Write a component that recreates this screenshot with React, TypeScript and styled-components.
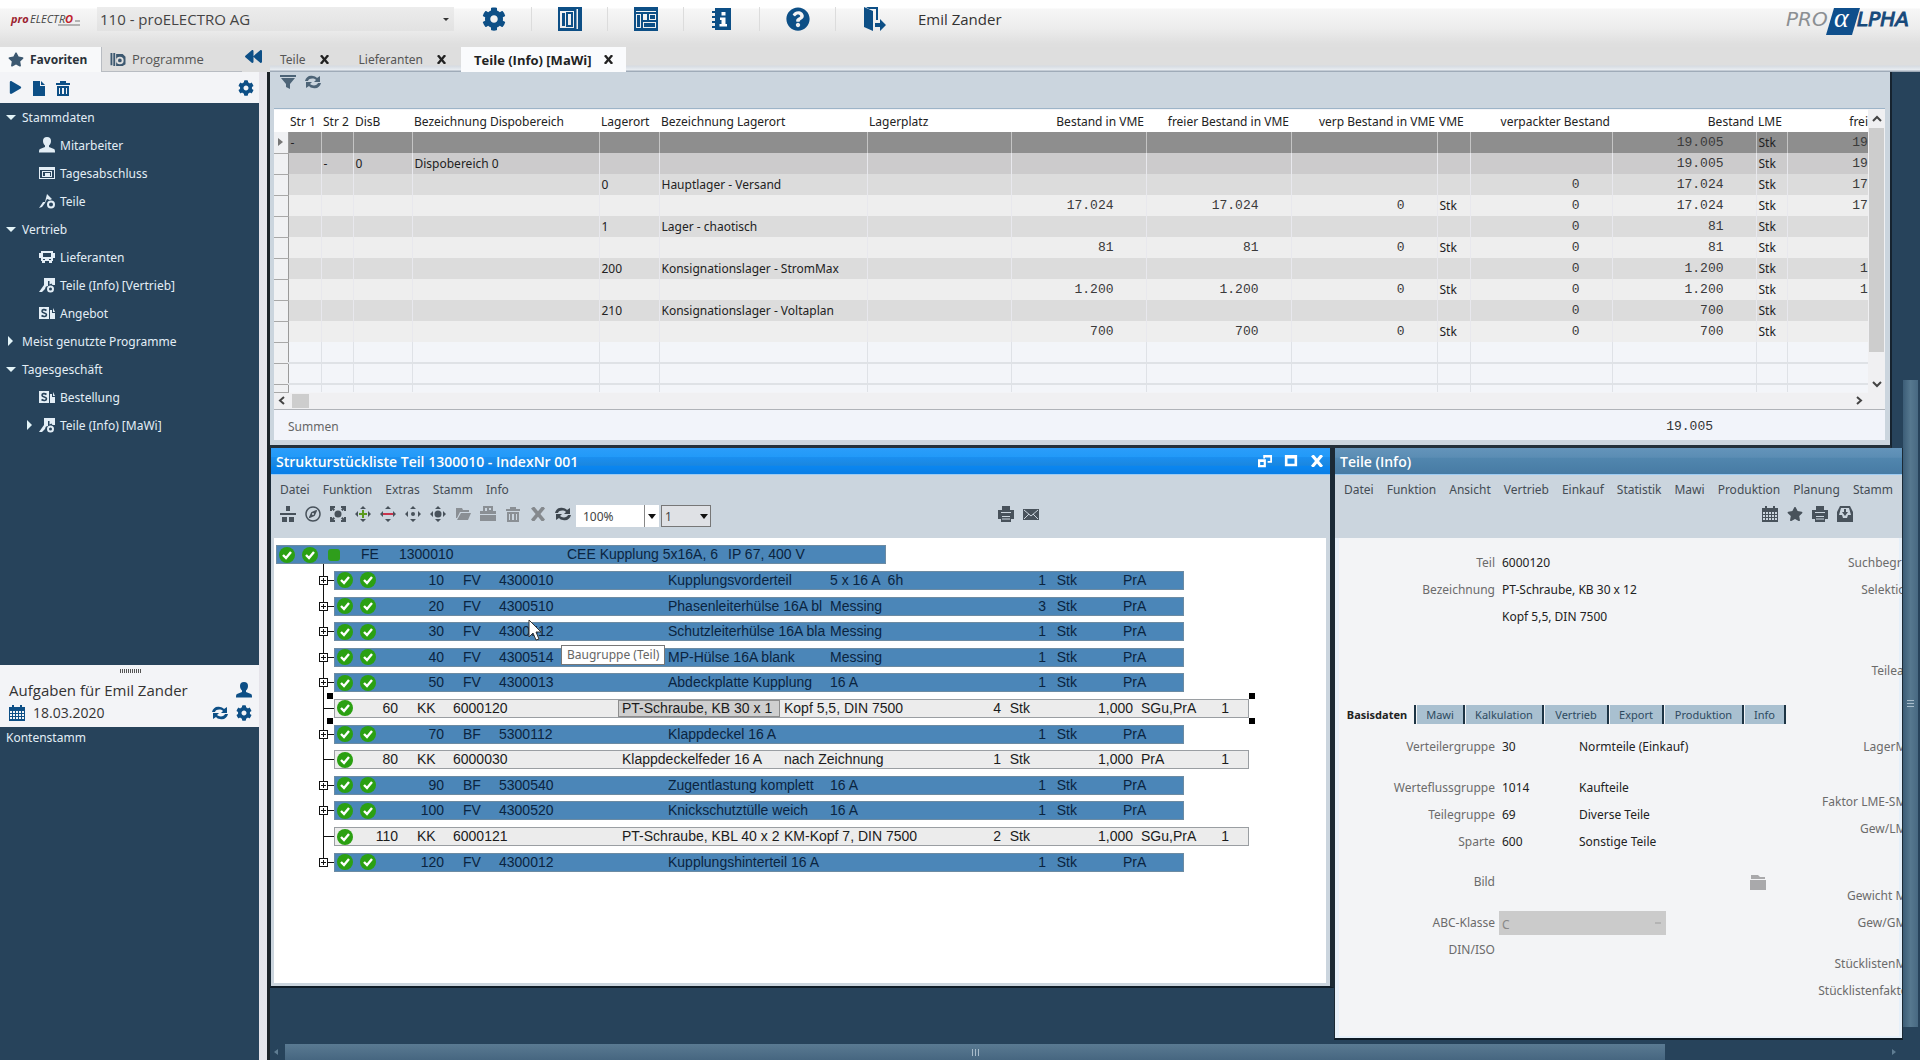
import React from "react";
import styled, { createGlobalStyle, css } from "styled-components";
import { FaCog, FaStar, FaPlay, FaQuestionCircle, FaBackward, FaFolderOpen, FaRegCompass } from "react-icons/fa";

const NAVY = "#27435b";
const BLUE = "#0d4f86";
const PANEL = "#cbd5de";
const SLATE = "#48525b";
const UI = `"Noto Sans", "Open Sans", sans-serif`;
const HEADING = `"Open Sans", "Noto Sans", sans-serif`;

const GlobalStyle = createGlobalStyle`
  * { box-sizing: border-box; }
  body { margin: 0; background: ${NAVY}; font-family: ${UI}; font-size: 12px; color: #222; }
  button, select, input { font: inherit; color: inherit; }
  button { border: 0; padding: 0; background: none; cursor: pointer; }
`;

const Page = styled.div`
  min-height: 100vh;
  display: flex;
  flex-direction: column;
  overflow: hidden;
`;

const TopBar = styled.header`
  height: 47px;
  padding-right: 8px;
  display: flex;
  align-items: flex-start;
  background: linear-gradient(#fff 0, #fff 8px, #f6f6f6 9px, #ededed 28px, #dfdfdf 44px);
`;
const CompanyLogo = styled.svg`
  width: 97px;
  height: 38px;
  flex: none;
`;
const ClientSelect = styled.select`
  appearance: none;
  width: 357px;
  height: 24px;
  margin-top: 7px;
  padding: 0 3px;
  border: 0;
  border-radius: 0;
  color: #444;
  font-family: ${HEADING};
  font-size: 15px;
  background: linear-gradient(#ececec, #e2e2e2);
`;
const ClientBox = styled.div`
  position: relative;
  &::after {
    content: "";
    position: absolute;
    right: 5px;
    top: 18px;
    border: 3px solid transparent;
    border-top-color: #333;
  }
`;
const MainTools = styled.nav`
  display: flex;
  height: 38px;
  padding-left: 2px;
  align-items: center;
`;
const MainTool = styled.button`
  width: 76px;
  height: 24px;
  display: grid;
  place-items: center;
  color: ${BLUE};
  border-right: 1px solid #dcdcdc;
  &:last-of-type { border-right: 0; }
  svg { width: 24px; height: 24px; }
`;
const UserName = styled.span`
  font-family: ${HEADING};
  font-size: 15px;
  line-height: 38px;
  color: #333;
  margin-left: 6px;
`;
const BrandLogo = styled.svg`
  width: 128px;
  height: 38px;
  margin-left: auto;
`;

const Body = styled.div`
  flex: 1;
  display: flex;
`;
const Sidebar = styled.aside`
  width: 270px;
  flex: none;
  display: flex;
  flex-direction: column;
  background: #dde2e8;
`;
const SideTabs = styled.div`
  height: 25px;
  display: flex;
  background: #dedede;
`;
const SideTab = styled.button<{ $active?: boolean }>`
  height: 25px;
  width: ${(p) => (p.$active ? 102 : 140)}px;
  display: flex;
  align-items: center;
  gap: 6px;
  padding-left: 8px;
  font-size: ${(p) => (p.$active ? 12 : 13)}px;
  font-family: ${(p) => (p.$active ? UI : HEADING)};
  font-weight: ${(p) => (p.$active ? 700 : 400)};
  color: ${(p) => (p.$active ? "#2a3138" : "#555")};
  background: ${(p) => (p.$active ? "#f8f9fa" : "transparent")};
  border-right: ${(p) => (p.$active ? "1px solid #b8bcc2" : "0")};
  border-bottom: ${(p) => (p.$active ? "0" : "1px solid #b8bcc2")};
  svg { color: #3c5870; width: 16px; height: 15px; flex: none; }
`;
const Collapse = styled.button`
  color: ${BLUE};
  font-size: 17px;
  width: 22px;
  height: 17px;
`;
const SideFrame = styled.div`
  flex: 1;
  display: flex;
  flex-direction: column;
  border-right: 3px solid #1d2227;
  padding-right: 8px;
  background: linear-gradient(90deg, #b9cfdd, #e6e4ea 100%);
`;
const SideTools = styled.div`
  height: 31px;
  padding: 0 5px 0 7px;
  display: flex;
  align-items: center;
  gap: 8px;
  background: #f3f4f7;
  color: ${BLUE};
`;
const IconButton = styled.button<{ $push?: boolean; $color?: string; $size?: number }>`
  width: 16px;
  height: 18px;
  display: grid;
  place-items: center;
  color: ${(p) => p.$color ?? BLUE};
  margin-left: ${(p) => (p.$push ? "auto" : "0")};
  svg { width: ${(p) => p.$size ?? 16}px; height: ${(p) => p.$size ?? 16}px; }
`;
const Favourites = styled.ul`
  list-style: none;
  margin: 0;
  padding: 0 0 226px;
  background: ${NAVY};
  color: #e3eef6;
`;
const FavGroup = styled.li`
  padding-left: 22px;
`;
const Caret = styled.span<{ $open?: boolean }>`
  width: 0;
  margin-left: -16px;
  margin-right: 6px;
  ${(p) =>
    p.$open
      ? css`border: 5px solid transparent; border-top: 5px solid #e3f4f8; border-bottom: 0;`
      : css`border: 5px solid transparent; border-left: 5px solid #e3f4f8; border-right: 0; margin-left: -14px; margin-right: 9px;`}
`;
const FavLabel = styled.button`
  height: 28px;
  width: 100%;
  display: flex;
  align-items: center;
  text-align: left;
  white-space: nowrap;
`;
const FavItem = styled(FavLabel)`
  padding-left: 17px;
  gap: 5px;
  svg { width: 16px; height: 16px; flex: none; }
  ${Caret} { margin: 0 2px 0 -12px; }
`;
const FavList = styled.ul`
  list-style: none;
  margin: 0;
  padding: 0;
`;
const Tasks = styled.section`
  height: 62px;
  padding: 4px 7px 0 9px;
  background: #f3f4f7;
  color: #333;
`;
const Grip = styled.div`
  width: 22px;
  height: 4px;
  margin: 0 auto 5px;
  background: repeating-linear-gradient(90deg, #555 0, #555 1px, #f3f4f7 1px, #f3f4f7 2px);
`;
const TaskLine = styled.div`
  height: 23px;
  display: flex;
  align-items: center;
  gap: 8px;
  font-family: ${HEADING};
  font-size: ${(p: { $small?: boolean }) => (p.$small ? 14 : 15)}px;
`;
const TaskTree = styled.div`
  flex: 1;
  padding: 1px 6px;
  line-height: 20px;
  background: ${NAVY};
  color: #e3eef6;
`;

const Main = styled.main`
  flex: 1;
  min-width: 0;
  display: flex;
  flex-direction: column;
`;
const DocTabs = styled.div`
  height: 25px;
  display: flex;
  background: linear-gradient(#dedede 0, #dedede 18px, #d6dbe2 19px, #e9edf2 23px, #9fabb8 24px);
`;
const DocTab = styled.div<{ $active?: boolean }>`
  display: flex;
  align-items: center;
  gap: ${(p) => (p.$active ? 12 : 14)}px;
  padding: 0 ${(p) => (p.$active ? 13 : 15)}px 0 ${(p) => (p.$active ? 13 : 15)}px;
  font-family: ${(p) => (p.$active ? HEADING : UI)};
  font-size: ${(p) => (p.$active ? 13 : 12)}px;
  font-weight: ${(p) => (p.$active ? 700 : 400)};
  color: ${(p) => (p.$active ? "#222" : "#555")};
  background: ${(p) => (p.$active ? "#fafbfd" : "transparent")};
  &:first-child { padding-left: 10px; }
  svg { width: 9px; height: 9px; display: block; color: #222; }
`;

const Workspace = styled.div`
  flex: 1;
  display: flex;
`;
const Desk = styled.div`
  flex: 1;
  min-width: 0;
  display: flex;
  flex-direction: column;
`;
const StockPanel = styled.section`
  margin-right: 11px;
  padding: 0 5px 5px 4px;
  background: ${PANEL};
  border-right: 2px solid #16232f;
  border-bottom: 3px solid #23303a;
`;
const StockTools = styled.div`
  height: 37px;
  padding: 1px 0 0 6px;
  display: flex;
  gap: 9px;
  border-bottom: 1px solid #9db4c8;
`;
const StockView = styled.div`
  display: flex;
  height: 301px;
  background: #f3f4f7;
  border-bottom: 1px solid #b0b3b8;
`;
const StockMain = styled.div`
  flex: 1;
  min-width: 0;
  overflow: hidden;
  display: flex;
  flex-direction: column;
`;
const StockTable = styled.table`
  width: 1657px;
  flex: none;
  table-layout: fixed;
  border-collapse: collapse;
  margin-top: 1px;
  th {
    height: 22px;
    background: #fff;
    color: #222;
    font-weight: 400;
    text-align: left;
    padding: 0 2px;
    white-space: nowrap;
  }
`;
const Cell = styled.td<{ $num?: boolean; $empty?: boolean; $line?: string }>`
  height: ${(p) => (p.$line === "stub" ? 8 : 21)}px;
  line-height: 20px;
  padding: 0 2px;
  white-space: nowrap;
  overflow: hidden;
  border-left: 1px solid ${(p) => (p.$empty ? "#dfe2e7" : p.$line ?? "rgba(214, 216, 222, 0.4)")};
  border-bottom: ${(p) => (p.$empty && p.$line !== "stub" ? "2px solid #dfe2e6" : "0")};
  ${(p) =>
    p.$num &&
    css`
      padding-right: 32px;
      text-align: right;
      color: #3a3a3a;
      font-family: "Liberation Mono", monospace;
      font-size: 13px;
    `}
`;
const Selector = styled.td`
  background: #f0f1f3;
  border-right: 1px solid #9a9a9a;
  border-bottom: 1px solid #a8a8a8;
  padding: 0;
`;
const RowMarker = styled.span`
  display: block;
  width: 0;
  margin-left: 4px;
  border: 4px solid transparent;
  border-left: 5px solid #777;
  border-right: 0;
`;
const HeadCell = styled.th<{ $right?: boolean }>`
  && { text-align: ${(p) => (p.$right ? "right" : "left")}; }
`;
const StockRow = styled.tr<{ $tone: string }>`
  background: ${(p) => p.$tone};
`;
const HScroll = styled.div`
  height: 17px;
  margin-top: auto;
  display: flex;
  align-items: center;
  padding: 0 4px 0 3px;
  gap: 5px;
  background: #f0f0f2;
  svg:last-child { margin-left: auto; }
`;
const HThumb = styled.div`
  width: 17px;
  height: 14px;
  background: #cdcdcd;
`;
const VScroll = styled.div`
  width: 17px;
  display: flex;
  flex-direction: column;
  align-items: center;
  padding: 5px 0 20px;
  background: #f0f0f2;
  svg:last-child { margin-top: auto; }
`;
const VThumb = styled.div`
  width: 15px;
  height: 224px;
  margin-top: 5px;
  background: #cdcdcd;
`;
const SumRow = styled.div`
  height: 30px;
  display: flex;
  align-items: center;
  justify-content: space-between;
  padding: 3px 172px 0 14px;
  background: #f2f4fa;
  color: #666;
`;
const SumValue = styled.span`
  font-family: "Liberation Mono", monospace;
  font-size: 13px;
  color: #333;
`;

const Windows = styled.div`
  display: flex;
  align-items: flex-start;
`;
const Win = styled.section<{ $main?: boolean }>`
  background: ${(p) => (p.$main ? PANEL : "#e6f0fa")};
  border-right: ${(p) => (p.$main ? 4 : 1)}px solid #1b2a36;
  border-bottom: 2px solid #0e1b26;
  border-left: 1px solid #1b2a36;
  ${(p) => (p.$main ? "flex: 1; min-width: 0;" : "width: 569px; flex: none;")}
`;
const TitleBar = styled.div<{ $active?: boolean }>`
  height: 27px;
  display: flex;
  align-items: center;
  padding: 0 6px 0 5px;
  color: #fff;
  font-family: ${HEADING};
  font-size: 14px;
  font-weight: 600;
  border-bottom: 1px solid #9dcbf2;
  background: ${(p) =>
    p.$active
      ? "linear-gradient(#2b9dfa 0, #229af8 34%, #1b8ff0 36%, #1a87e0 66%, #0a86f0 70%, #0a7fe6)"
      : "linear-gradient(#6494ba 0, #5b8db4 36%, #5186ae 38%, #477ba4)"};
`;
const WinButtons = styled.div`
  margin-left: auto;
  display: flex;
  gap: 12px;
  svg { width: 14px; height: 14px; display: block; }
  button:last-child svg { width: 12px; margin: 0 1px; }
`;
const MenuBar = styled.nav`
  height: 28px;
  display: flex;
  align-items: center;
  gap: 13px;
  padding: 0 9px;
  background: ${PANEL};
  white-space: nowrap;
  overflow: hidden;
  button { color: #444c54; flex: none; }
`;
const ToolBar = styled.div<{ $end?: boolean }>`
  height: 35px;
  display: flex;
  align-items: flex-start;
  gap: 9px;
  padding: ${(p) => (p.$end ? "2px 49px 0 0" : "2px 0 0 9px")};
  justify-content: ${(p) => (p.$end ? "flex-end" : "flex-start")};
  background: ${PANEL};
`;
const Combo = styled.select<{ $w: number; $plain?: boolean }>`
  appearance: none;
  width: ${(p) => p.$w}px;
  height: 22px;
  padding: 0 ${(p) => (p.$plain ? 3 : 7)}px;
  border: ${(p) => (p.$plain ? "1px solid #777" : "0")};
  border-radius: 0;
  background: ${(p) => (p.$plain ? "#dfe1e5" : "#fff")};
  color: #444;
`;
const ComboBox = styled.div<{ $plain?: boolean }>`
  position: relative;
  height: 22px;
  margin-right: ${(p) => (p.$plain ? 278 : 0)}px;
  margin-left: ${(p) => (p.$plain ? -7 : -4)}px;
  &::after {
    content: "";
    position: absolute;
    right: 3px;
    top: 9px;
    border: 4px solid transparent;
    border-top: 5px solid #111;
    border-bottom: 0;
  }
  &::before {
    content: "";
    position: absolute;
    right: 14px;
    top: 0;
    bottom: 0;
    border-left: ${(p) => (p.$plain ? "0" : "1px solid #888")};
  }
`;

const Canvas = styled.div`
  position: relative;
  height: 445px;
  margin: 0 4px 3px 3px;
  padding: 4px 0 0 2px;
  background: #fff;
  font-family: "Liberation Sans", Arial, sans-serif;
  font-size: 14px;
  overflow: hidden;
`;
const Bom = styled.div`
  position: relative;
  height: 333px;
  display: grid;
  grid-template-rows: repeat(13, 1fr);
`;
const Spine = styled.div`
  position: absolute;
  left: 47px;
  top: 22px;
  bottom: 13px;
  border-left: 1px solid #111;
`;
const BomLine = styled.div<{ $level: number }>`
  position: relative;
  display: flex;
  align-items: center;
  padding-left: ${(p) => p.$level * 58}px;
`;
const Branch = styled.div`
  position: absolute;
  left: 47px;
  width: 11px;
  border-top: 1px solid #111;
`;
const Expander = styled.button`
  position: absolute;
  left: 43px;
  width: 9px;
  height: 9px;
  border: 1px solid #111;
  background: linear-gradient(#111, #111) center / 5px 1px no-repeat, linear-gradient(#111, #111) center / 1px 5px no-repeat, #fff;
`;
type Kind = "root" | "group" | "part";
const BAR: Record<Kind, { width: number; cols: string }> = {
  root: { width: 610, cols: "84px 38px 168px 161px 1fr" },
  group: { width: 850, cols: "48px 61px 19px 36px 165px 162px 220px 31px 46px 1fr" },
  part: { width: 915, cols: "24px 39px 19px 36px 165px 162px 221px 29px 103px 8px 60px 28px" },
};
const Bar = styled.div<{ $kind: Kind }>`
  width: ${(p) => BAR[p.$kind].width}px;
  height: 19px;
  display: grid;
  grid-template-columns: ${(p) => BAR[p.$kind].cols};
  align-items: center;
  color: ${(p) => (p.$kind === "part" ? "#1b1b1b" : "#0a2440")};
  background: ${(p) => (p.$kind === "part" ? "#ececec" : "#4b86b8")};
  border: 1px solid ${(p) => (p.$kind === "part" ? "#9a9ea2" : "#6c8ba3")};
  white-space: nowrap;
  > span { line-height: 17px; }
`;
const Right = styled.span`
  text-align: right;
`;
const Name = styled.span<{ $boxed?: boolean }>`
  padding-left: 4px;
  ${(p) => p.$boxed && css`background: #cfcfcf; box-shadow: inset 0 0 0 1px #8d8d8d;`}
`;
const Checks = styled.div`
  display: flex;
  gap: 7px;
  padding-left: 2px;
  svg { width: 16px; height: 16px; display: block; flex: none; }
`;
const Handle = styled.i<{ $right?: boolean; $bottom?: boolean }>`
  position: absolute;
  width: 6px;
  height: 6px;
  background: #000;
  left: ${(p) => (p.$right ? 973 : 51)}px;
  ${(p) => (p.$bottom ? "bottom: -3px;" : "top: -3px;")}
`;
const Pointer = styled.svg`
  position: absolute;
  left: 254px;
  top: 81px;
  width: 14px;
  height: 22px;
`;
const Tooltip = styled.div`
  position: absolute;
  left: 287px;
  top: 107px;
  height: 20px;
  padding: 0 5px;
  line-height: 18px;
  border: 1px solid #777;
  background: #fff;
  color: #666;
  font-family: ${UI};
  font-size: 12px;
`;

const FormFrame = styled.div`
  overflow: hidden;
`;
const Form = styled.form`
  height: 498px;
  margin: 0 3px 2px 4px;
  padding-top: 11px;
  background: #f3f4f6;
  color: #222;
`;
const FormColumns = styled.div`
  display: flex;
  margin-right: -14px;
`;
const FormColumn = styled.div<{ $far?: boolean }>`
  ${(p) => (p.$far ? "width: 140px; flex: none; color: #6b6b6b; text-align: right;" : "flex: 1; min-width: 0;")}
`;
const FormRow = styled.div<{ $before?: number }>`
  height: 27px;
  line-height: 27px;
  margin-top: ${(p) => p.$before ?? 0}px;
  display: grid;
  grid-template-columns: 156px 84px 1fr;
  align-items: center;
  white-space: nowrap;
`;
const FarRow = styled.div<{ $before?: number }>`
  height: 27px;
  line-height: 27px;
  margin-top: ${(p) => p.$before ?? 0}px;
  white-space: nowrap;
`;
const Label = styled.label`
  text-align: right;
  color: #6b6b6b;
`;
const Value = styled.output`
  padding-left: 7px;
`;
const ValueName = styled.span``;
const FormTabs = styled.div`
  display: flex;
  height: 19px;
  margin: 21px 0 9px;
`;
const FormTab = styled.button<{ $active?: boolean; $w: number }>`
  width: ${(p) => p.$w}px;
  font-size: 11px;
  font-weight: ${(p) => (p.$active ? 700 : 400)};
  color: ${(p) => (p.$active ? "#222" : "#2d4a60")};
  background: ${(p) => (p.$active ? "transparent" : "#a9c0d0")};
  border-right: 2px solid #1d3444;
  border-left: 1px solid #f3f4f6;
`;
const ClassBox = styled.div`
  position: relative;
  grid-column: 2 / 4;
  width: 167px;
  height: 24px;
  margin-left: 4px;
  &::after {
    content: "";
    position: absolute;
    right: 5px;
    top: 11px;
    width: 6px;
    border-top: 2px solid #b4b4b4;
  }
`;
const ClassSelect = styled.select`
  appearance: none;
  display: block;
  width: 100%;
  height: 100%;
  padding: 0 3px;
  border: 0;
  border-radius: 0;
  background: #cbcbcb;
  color: #888;
  opacity: 1;
`;
const PictureButton = styled(IconButton)`
  grid-column: 3;
  margin-left: 171px;
`;

const VTrack = styled.div`
  width: 17px;
  flex: none;
  padding-top: 308px;
  background: ${NAVY};
`;
const DarkThumb = styled.div`
  height: 647px;
  margin-right: 2px;
  background: linear-gradient(90deg, #3c5d77, #56788f 50%, #486982);
  display: grid;
  place-items: center;
`;
const HTrack = styled.div`
  height: 21px;
  margin-top: auto;
  display: flex;
  align-items: center;
  padding: 3px 23px 0 3px;
  gap: 6px;
  background: ${NAVY};
`;
const DarkHThumb = styled.div`
  width: 85%;
  height: 16px;
  margin-right: auto;
  background: linear-gradient(#5a7a92, #466680);
  display: grid;
  place-items: center;
`;
const Ridges = styled.div<{ $down?: boolean }>`
  width: 7px;
  height: 7px;
  background: repeating-linear-gradient(${(p) => (p.$down ? "180deg" : "90deg")}, #a8bccb 0, #a8bccb 1px, transparent 1px, transparent 3px);
`;

const Svg = (p: React.SVGProps<SVGSVGElement>) => <svg viewBox="0 0 16 16" fill="currentColor" aria-hidden="true" {...p} />;

const PanelIcon = () => (
  <Svg viewBox="0 0 24 24"><path fillRule="evenodd" d="M0 0h24v24H0zM2 4v17h14V4zM18.500 2v20h1.500V2z" /><path fillRule="evenodd" d="M4 6h3v13H4zM8 5h7v15H8zM10 7v11h3V7z" /></Svg>
);
const LayoutIcon = () => (
  <Svg viewBox="0 0 24 24"><path fillRule="evenodd" d="M0 0h24v24H0zM2 4v1h20V4zM2 7v14h5V7zM9 7v6h4V7zM15 7v6h7V7zM9 15v6h13v-6z" /><path d="M3 8h3v12H3zM16 8h5v4h-5zM10 16h11v4H10z" /></Svg>
);
const InfoIcon = () => (
  <Svg viewBox="0 0 24 24"><path d="M5 1h16v22H5zM2 4h3v2H2zM2 9h3v2H2zM2 14h3v2H2zM2 19h3v2H2z" /><path fill="#fff" d="M11.500 5h4v3.500h-4zM10 10.500h5.500V17H17v2.500H9.500V17h2v-4H10z" /></Svg>
);
const ExitIcon = () => (
  <Svg viewBox="0 0 24 24"><path d="M2 0l9 4v20l-9-4zM4 0h12v13h-2V2H7zM13 16h5v-4l6 6-6 6v-4h-5z" /></Svg>
);
const Cross = () => (
  <Svg viewBox="0 0 10 10"><path d="M0 1l1.500-1h1L5 3l2.500-3H9l1 1-3.300 4L10 9 9 10H7.500L5 7l-2.500 3H1L0 9l3.300-4z" /></Svg>
);
const PersonIcon = () => (
  <Svg><path d="M8 0a4 4 0 014 4c0 2-1 3.500-2 4.500V10l5 2c1 .5 1 2 1 3.500H0C0 14 0 12.500 1 12l5-2V8.500C5 7.500 4 6 4 4a4 4 0 014-4z" /></Svg>
);
const BusIcon = () => (
  <Svg><path fillRule="evenodd" d="M2 2h12v2h2v5h-2v3h-1v2h-3v-2H6v2H3v-2H2V9H0V4h2zM4 4v4h8V4zM4 10v1h2v-1zM10 10v1h2v-1z" /></Svg>
);
const PrintIcon = () => (
  <Svg><path fillRule="evenodd" d="M4 0h8v4h4v9h-3v3H3v-3H0V4h4zM3 6v1h10V6zM4 10v1h8v-1zM4 12.500v1h8v-1z" /></Svg>
);
const PictureFolder = () => <Svg><path d="M1 1h7l2 2h5v2H1zM0 6h16v10H0z" /></Svg>;
const DocIcon = () => <Svg><path d="M2 1h7v5h5v10H2zM10 1l4 4h-4z" /></Svg>;
const TrashIcon = () => (
  <Svg><path fillRule="evenodd" d="M5 1h6v2h4v2H1V3h4zM2 6h12v10H2zM4 8v6h1V8zM7 8v6h2V8zM11 8v6h1V8z" /></Svg>
);
const ProgIcon = () => (
  <Svg><path fillRule="evenodd" d="M0 1h2v13H0zM3 1h2v14H3zM6 2h7l3 3v8l-3 2H6zM10 5a4 4 0 100 8 4 4 0 000-8zm0 2a2 2 0 110 4 2 2 0 010-4z" /></Svg>
);
const CloseDayIcon = () => (
  <Svg><path fillRule="evenodd" d="M0 2h16v12H0zM1 5v8h14V5zM3 6h10v6H3zM4 7v4h8V7zM6 8h5v3H6z" /></Svg>
);
const PartIcon = () => (
  <Svg><path d="M8 1l5 5-2 1-3-1-2 4-3 4-3 1 4-6h2z" /><circle cx="12" cy="11.500" r="3" fill="none" stroke="currentColor" strokeWidth="2" /></Svg>
);
const PartInfoIcon = () => (
  <Svg><path d="M5 1h11v7h-2.500l-1-1.500-2 1V4H9v5L5 10z" /><path d="M0 15l5-7 2 1-1 3-3 3z" /><circle cx="11.500" cy="12" r="2.500" fill="none" stroke="currentColor" strokeWidth="2" /></Svg>
);
const OfferIcon = () => (
  <Svg><path fillRule="evenodd" d="M0 2h10v12H0z" /><path d="M7.500 5.500c-2-1.500-4.500-1-4.500.7C3 8.500 7.500 7.500 7.500 9.800c0 1.900-3 2.200-5 .7" fill="none" stroke={NAVY} strokeWidth="1.600" /><path d="M11 5h2v3h3v6h-5zM14 3l2 4h-2z" /></Svg>
);
const Funnel = () => <Svg><path d="M0 1h16v2H0zM1 4h14l-5 6v5l-4-2v-3z" /></Svg>;
const Loop = () => (
  <Svg><path d="M0 7c1-4 4-6 8-5 2 0 3 1 4 2l3-2v6H9l2-2C9 4 4 4 3 7zM16 9c-1 4-4 6-8 5-2 0-3-1-4-2l-3 2V8h6l-2 2c2 2 7 2 8-1z" /></Svg>
);
const OrgIcon = () => <Svg><path d="M6 0h4v5H6zM0 7h16v2H0zM2 11h5v5H2zM9 11h5v5H9z" /></Svg>;
const Corners = ({ inner, tint }: { inner: React.ReactNode; tint?: string }) => (
  <Svg>
    <path d="M5 3h6L8 0zM5 13h6l-3 3zM3 5v6L0 8zM13 5v6l3-3z" />
    <g fill={tint ?? "currentColor"}>{inner}</g>
  </Svg>
);
const FitIcon = () => (
  <Svg><path d="M0 0h5v2H3.500L5 3.500 3.500 5 2 3.500V5H0zM16 0v5h-2V3.500L12.500 5 11 3.500 12.500 2H11V0zM0 16v-5h2v1.500L3.500 11 5 12.500 3.500 14H5v2zM16 16h-5v-2h1.500L11 12.500l1.500-1.500 1.500 1.500V11h2z" /><circle cx="8" cy="8" r="3.500" /></Svg>
);
const SaveIcon = () => <Svg><path fillRule="evenodd" d="M0 5h3V0h10v5h3v10H0zM5 2v3h2V2zM9 2v2h2V2zM0 8v1h16V8z" /></Svg>;
const SolidFolderOpen = () => <Svg><path d="M1 2h6l1 2h6v2H5L2 12H1zM6 7h10l-3 7H2z" /></Svg>;
const MailIcon = () => (
  <Svg><path d="M0 3h16v11H0z" /><path d="M1 4l7 6 7-6M1 13l5-5M15 13l-5-5" fill="none" stroke={PANEL} /></Svg>
);
const InboxIcon = () => (
  <Svg><path fillRule="evenodd" d="M3 0h10l3 6v10H0V6zM4 2L2 9h3l1 3h4l1-3h3l-2-7zM7 3h2v3h2L8 10 5 6h2z" /></Svg>
);
const CalIcon = () => (
  <Svg><path fillRule="evenodd" d="M0 2h3V0h2v2h6V0h2v2h3v14H0zM1 6v2h2V6zM4 6v2h2V6zM7 6v2h2V6zM10 6v2h2V6zM13 6v2h2V6zM1 9v2h2V9zM4 9v2h2V9zM7 9v2h2V9zM10 9v2h2V9zM13 9v2h2V9zM1 12v2h2v-2zM4 12v2h2v-2zM7 12v2h2v-2zM10 12v2h2v-2zM13 12v2h2v-2z" /></Svg>
);
const RestoreIcon = () => (
  <Svg><path fillRule="evenodd" d="M6 1h10v9h-5V8h3V4H8v1H6zM0 6h9v9H0zM2.500 9v3.500h4V9z" /></Svg>
);
const MaxIcon = () => <Svg><path fillRule="evenodd" d="M1 1h14v13H1zM4 5v6h8V5z" /></Svg>;
const Check = ({ plain }: { plain?: boolean }) =>
  plain ? (
    <svg viewBox="0 0 16 16"><rect x="3" y="2" width="12" height="12" rx="3" fill="#2f9e1c" /></svg>
  ) : (
    <svg viewBox="0 0 16 16"><circle cx="8" cy="8" r="8" fill="#2ba012" /><path d="M4 8l3 3 5-6" fill="none" stroke="#fff" strokeWidth="2.400" /></svg>
  );
const Chevron = ({ d }: { d: string }) => (
  <svg width="10" height="9" viewBox="0 0 10 9" fill="none" stroke="#444" strokeWidth="2"><path d={d} /></svg>
);
const Nudge = ({ d }: { d: string }) => (
  <svg width="6" height="8" viewBox="0 0 6 8" fill="#5f7d93"><path d={d} /></svg>
);

type Favourite = { name: string; icon: React.ReactNode; nested?: boolean };
const favourites: { name: string; open: boolean; items: Favourite[] }[] = [
  {
    name: "Stammdaten",
    open: true,
    items: [
      { name: "Mitarbeiter", icon: <PersonIcon /> },
      { name: "Tagesabschluss", icon: <CloseDayIcon /> },
      { name: "Teile", icon: <PartIcon /> },
    ],
  },
  {
    name: "Vertrieb",
    open: true,
    items: [
      { name: "Lieferanten", icon: <BusIcon /> },
      { name: "Teile (Info) [Vertrieb]", icon: <PartInfoIcon /> },
      { name: "Angebot", icon: <OfferIcon /> },
    ],
  },
  { name: "Meist genutzte Programme", open: false, items: [] },
  {
    name: "Tagesgeschäft",
    open: true,
    items: [
      { name: "Bestellung", icon: <OfferIcon /> },
      { name: "Teile (Info) [MaWi]", icon: <PartInfoIcon />, nested: true },
    ],
  },
];

const columns: [string, number, boolean?][] = [
  ["Str 1", 33], ["Str 2", 32], ["DisB", 59], ["Bezeichnung Dispobereich", 187], ["Lagerort", 60], ["Bezeichnung Lagerort", 208],
  ["Lagerplatz", 144], ["Bestand in VME", 135, true], ["freier Bestand in VME", 145, true], ["verp Bestand in VME", 146, true],
  ["VME", 33], ["verpackter Bestand", 142, true], ["Bestand", 144, true], ["LME", 31], ["freier Bestand", 144, true],
];
const NUM = [7, 8, 9, 11, 12, 14];

const line = (lager: string, name: string, n: string, detail: boolean) =>
  detail
    ? ["", "", "", "", "", "", "", n, n, "0", "Stk", "0", n, "Stk", n]
    : ["", "", "", "", lager, name, "", "", "", "", "", "0", n, "Stk", n];
const stock: [string, string[]][] = [
  ["#8e8e8e", ["-", "", "", "", "", "", "", "", "", "", "", "", "19.005", "Stk", "19.005"]],
  ["#cccbcc", ["", "-", "0", "Dispobereich 0", "", "", "", "", "", "", "", "", "19.005", "Stk", "19.005"]],
  ["#dcdcdc", line("0", "Hauptlager - Versand", "17.024", false)],
  ["#eeeeee", line("", "", "17.024", true)],
  ["#dcdcdc", line("1", "Lager - chaotisch", "81", false)],
  ["#eeeeee", line("", "", "81", true)],
  ["#dcdcdc", line("200", "Konsignationslager - StromMax", "1.200", false)],
  ["#eeeeee", line("", "", "1.200", true)],
  ["#dcdcdc", line("210", "Konsignationslager - Voltaplan", "700", false)],
  ["#eeeeee", line("", "", "700", true)],
];

type BomEntry = { pos: string; type: string; nr: string; name: string; spec: string; qty: string; sup?: string; selected?: boolean };
const bom: BomEntry[] = [
  { pos: "10", type: "FV", nr: "4300010", name: "Kupplungsvorderteil", spec: "5 x 16 A  6h", qty: "1" },
  { pos: "20", type: "FV", nr: "4300510", name: "Phasenleiterhülse 16A bl", spec: "Messing", qty: "3" },
  { pos: "30", type: "FV", nr: "4300512", name: "Schutzleiterhülse 16A bla", spec: "Messing", qty: "1" },
  { pos: "40", type: "FV", nr: "4300514", name: "MP-Hülse 16A blank", spec: "Messing", qty: "1" },
  { pos: "50", type: "FV", nr: "4300013", name: "Abdeckplatte Kupplung", spec: "16 A", qty: "1" },
  { pos: "60", type: "KK", nr: "6000120", name: "PT-Schraube, KB 30 x 1", spec: "Kopf 5,5, DIN 7500", qty: "4", sup: "SGu,PrA", selected: true },
  { pos: "70", type: "BF", nr: "5300112", name: "Klappdeckel 16 A", spec: "", qty: "1" },
  { pos: "80", type: "KK", nr: "6000030", name: "Klappdeckelfeder 16 A", spec: "nach Zeichnung", qty: "1", sup: "PrA" },
  { pos: "90", type: "BF", nr: "5300540", name: "Zugentlastung komplett", spec: "16 A", qty: "1" },
  { pos: "100", type: "FV", nr: "4300520", name: "Knickschutztülle weich", spec: "16 A", qty: "1" },
  { pos: "110", type: "KK", nr: "6000121", name: "PT-Schraube, KBL 40 x 2", spec: "KM-Kopf 7, DIN 7500", qty: "2", sup: "SGu,PrA" },
  { pos: "120", type: "FV", nr: "4300012", name: "Kupplungshinterteil 16 A", spec: "", qty: "1" },
];

const SpecBox = styled.span`
  display: flex;
  justify-content: space-between;
  white-space: pre;
  padding-left: 4px;
`;

const BomRow = ({ e }: { e: BomEntry }) => {
  const part = e.sup !== undefined;
  return (
    <BomLine $level={1}>
      <Branch />
      {!part && <Expander aria-label={`Position ${e.pos}`} />}
      <Bar $kind={part ? "part" : "group"}>
        <Checks><Check />{!part && <Check />}</Checks>
        <Right>{e.pos}</Right>
        <span />
        <span>{e.type}</span>
        <span>{e.nr}</span>
        <Name $boxed={e.selected}>{e.name}</Name>
        <SpecBox><span>{e.spec}</span><span>{e.qty}</span></SpecBox>
        <Right>Stk</Right>
        {part && <Right>1,000</Right>}
        <span />
        <span>{e.sup ?? "PrA"}</span>
        {part && <Right>1</Right>}
      </Bar>
      {e.selected && (
        <>
          <Handle /><Handle $right /><Handle $bottom /><Handle $right $bottom />
        </>
      )}
    </BomLine>
  );
};

const formTabs: [string, number][] = [
  ["Basisdaten", 77], ["Mawi", 49], ["Kalkulation", 79], ["Vertrieb", 65], ["Export", 55], ["Produktion", 80], ["Info", 42],
];

const Field = ({ id, label, value, name, before }: { id: string; label: string; value?: string; name?: string; before?: number }) => (
  <FormRow $before={before}>
    <Label htmlFor={id}>{label}</Label>
    <Value id={id}>{value}</Value>
    <ValueName>{name}</ValueName>
  </FormRow>
);

export default function App() {
  return (
    <Page>
      <GlobalStyle />
      <TopBar>
        <CompanyLogo viewBox="0 0 97 38" role="img" aria-label="proELECTRO AG">
          <text x="11" y="23" fontFamily="Open Sans" fontSize="11" fontStyle="italic" fontWeight="700" fill="#9c2430">pro</text>
          <text x="30" y="23" fontFamily="Open Sans" fontSize="11" fontStyle="italic" fill="#444">ELECT</text>
          <text x="59" y="23" fontFamily="Open Sans" fontSize="11" fontStyle="italic" fill="#444">R</text>
          <text x="65" y="23" fontFamily="Open Sans" fontSize="11" fontStyle="italic" fontWeight="700" fill="#c0202c">O</text>
          <path d="M58 25h22M75 21h5" stroke="#777" />
        </CompanyLogo>
        <ClientBox>
          <ClientSelect aria-label="Mandant"><option>110 - proELECTRO AG</option></ClientSelect>
        </ClientBox>
        <MainTools>
          <MainTool aria-label="Einstellungen"><FaCog /></MainTool>
          <MainTool aria-label="Seitenleiste"><PanelIcon /></MainTool>
          <MainTool aria-label="Layout"><LayoutIcon /></MainTool>
          <MainTool aria-label="Info"><InfoIcon /></MainTool>
          <MainTool aria-label="Hilfe"><FaQuestionCircle /></MainTool>
          <MainTool aria-label="Abmelden"><ExitIcon /></MainTool>
        </MainTools>
        <UserName>Emil Zander</UserName>
        <BrandLogo viewBox="0 0 128 38" role="img" aria-label="proALPHA">
          <path d="M50 8h26l-8 27H42z" fill="#0f4f8c" />
          <text x="2" y="26" fontFamily="DejaVu Sans" fontSize="20" fontStyle="italic" fill="#8b8f93">PRO</text>
          <text x="50" y="27" fontFamily="Liberation Serif" fontSize="28" fontStyle="italic" fill="#fff">α</text>
          <text x="73" y="26" fontFamily="DejaVu Sans" fontSize="20" fontStyle="italic" fill="#17497a" stroke="#17497a">LPHA</text>
        </BrandLogo>
      </TopBar>
      <Body>
        <Sidebar>
          <SideTabs>
            <SideTab $active><FaStar />Favoriten</SideTab>
            <SideTab><ProgIcon />Programme</SideTab>
            <Collapse aria-label="Einklappen"><FaBackward /></Collapse>
          </SideTabs>
          <SideFrame>
            <SideTools>
              <IconButton aria-label="Starten" $size={13}><FaPlay /></IconButton>
              <IconButton aria-label="Neu"><DocIcon /></IconButton>
              <IconButton aria-label="Löschen"><TrashIcon /></IconButton>
              <IconButton aria-label="Optionen" $push><FaCog /></IconButton>
            </SideTools>
            <Favourites>
              {favourites.map((g) => (
                <FavGroup key={g.name}>
                  <FavLabel><Caret $open={g.open} />{g.name}</FavLabel>
                  <FavList>
                    {g.items.map((f) => (
                      <li key={f.name}><FavItem>{f.nested && <Caret />}{f.icon}{f.name}</FavItem></li>
                    ))}
                  </FavList>
                </FavGroup>
              ))}
            </Favourites>
            <Tasks>
              <Grip />
              <TaskLine>Aufgaben für Emil Zander<IconButton $push aria-label="Benutzer"><PersonIcon /></IconButton></TaskLine>
              <TaskLine $small>
                <IconButton aria-label="Kalender"><CalIcon /></IconButton>18.03.2020
                <IconButton $push aria-label="Aktualisieren"><Loop /></IconButton>
                <IconButton aria-label="Optionen"><FaCog /></IconButton>
              </TaskLine>
            </Tasks>
            <TaskTree>Kontenstamm</TaskTree>
          </SideFrame>
        </Sidebar>
        <Main>
          <DocTabs>
            <DocTab>Teile<button aria-label="Teile schließen"><Cross /></button></DocTab>
            <DocTab>Lieferanten<button aria-label="Lieferanten schließen"><Cross /></button></DocTab>
            <DocTab $active>Teile (Info) [MaWi]<button aria-label="Teile (Info) schließen"><Cross /></button></DocTab>
          </DocTabs>
          <Workspace>
            <Desk>
              <StockPanel>
                <StockTools>
                  <IconButton $color="#4d6477" aria-label="Filter"><Funnel /></IconButton>
                  <IconButton $color="#4d6477" aria-label="Aktualisieren"><Loop /></IconButton>
                </StockTools>
                <StockView>
                  <StockMain>
                    <StockTable>
                      <colgroup>
                        <col width={14} />
                        {columns.map(([c, w]) => <col key={c} width={w} />)}
                      </colgroup>
                      <thead>
                        <tr>
                          <th />
                          {columns.map(([c, , r]) => <HeadCell key={c} $right={r}>{c}</HeadCell>)}
                        </tr>
                      </thead>
                      <tbody>
                        {stock.map(([tone, cells], i) => (
                          <StockRow key={i} $tone={tone}>
                            <Selector>{i === 0 && <RowMarker />}</Selector>
                            {cells.map((c, j) => <Cell key={j} $num={NUM.includes(j)} $line={i === 0 ? "#c4c4c4" : undefined}>{c}</Cell>)}
                          </StockRow>
                        ))}
                        {[undefined, undefined, "stub"].map((kind, i) => (
                          <StockRow key={i} $tone="#f3f5f9">
                            <Selector />
                            {columns.map(([c]) => <Cell key={c} $empty $line={kind} />)}
                          </StockRow>
                        ))}
                      </tbody>
                    </StockTable>
                    <HScroll><Chevron d="M7 1L3 4.500 7 8" /><HThumb /><Chevron d="M3 1l4 3.500L3 8" /></HScroll>
                  </StockMain>
                  <VScroll><Chevron d="M1 7l4-4 4 4" /><VThumb /><Chevron d="M1 2l4 4 4-4" /></VScroll>
                </StockView>
                <SumRow>Summen<SumValue>19.005</SumValue></SumRow>
              </StockPanel>
              <Windows>
                <Win $main>
                  <TitleBar $active>
                    Strukturstückliste Teil 1300010 - IndexNr 001
                    <WinButtons>
                      <button aria-label="Wiederherstellen"><RestoreIcon /></button>
                      <button aria-label="Maximieren"><MaxIcon /></button>
                      <button aria-label="Schließen"><Cross /></button>
                    </WinButtons>
                  </TitleBar>
                  <MenuBar>
                    {["Datei", "Funktion", "Extras", "Stamm", "Info"].map((m) => <button key={m}>{m}</button>)}
                  </MenuBar>
                  <ToolBar>
                    <IconButton $color={SLATE} aria-label="Struktur"><OrgIcon /></IconButton>
                    <IconButton $color={SLATE} aria-label="Kompass"><FaRegCompass /></IconButton>
                    <IconButton $color={SLATE} aria-label="Einpassen"><FitIcon /></IconButton>
                    <IconButton $color={SLATE} aria-label="Aufklappen"><Corners tint="#5a9a1e" inner={<path d="M7 4h2v3h3v2H9v3H7V9H4V7h3z" />} /></IconButton>
                    <IconButton $color={SLATE} aria-label="Zuklappen"><Corners tint="#c8344c" inner={<path d="M3 7h10v2H3z" />} /></IconButton>
                    <IconButton $color={SLATE} aria-label="Ebene"><Corners inner={<circle cx="8" cy="8" r="2" />} /></IconButton>
                    <IconButton $color={SLATE} aria-label="Zentrieren"><Corners inner={<circle cx="8" cy="8" r="3.500" />} /></IconButton>
                    <IconButton $color="#8a8f94" aria-label="Öffnen"><SolidFolderOpen /></IconButton>
                    <IconButton $color="#8a8f94" aria-label="Speichern"><SaveIcon /></IconButton>
                    <IconButton $color="#8a8f94" aria-label="Löschen"><TrashIcon /></IconButton>
                    <IconButton $color="#85898d" aria-label="Abbrechen" $size={14}><Cross /></IconButton>
                    <IconButton $color="#3e474f" aria-label="Aktualisieren"><Loop /></IconButton>
                    <ComboBox><Combo $w={83} aria-label="Zoom"><option>100%</option></Combo></ComboBox>
                    <ComboBox $plain><Combo $w={50} $plain aria-label="Seite"><option>1</option></Combo></ComboBox>
                    <IconButton $color={SLATE} aria-label="Drucken"><PrintIcon /></IconButton>
                    <IconButton $color={SLATE} aria-label="Senden"><MailIcon /></IconButton>
                  </ToolBar>
                  <Canvas>
                    <Bom>
                      <Spine />
                      <BomLine $level={0}>
                        <Bar $kind="root">
                          <Checks><Check /><Check /><Check plain /></Checks>
                          <span>FE</span>
                          <span>1300010</span>
                          <span>CEE Kupplung 5x16A, 6</span>
                          <span>IP 67, 400 V</span>
                        </Bar>
                      </BomLine>
                      {bom.map((e) => <BomRow key={e.pos} e={e} />)}
                    </Bom>
                    <Pointer viewBox="0 0 14 22"><path d="M1 1v17l4-4 3 7 3-1-3-7h5z" fill="#fff" stroke="#333" /></Pointer>
                    <Tooltip role="tooltip">Baugruppe (Teil)</Tooltip>
                  </Canvas>
                </Win>
                <Win>
                  <TitleBar>Teile (Info)</TitleBar>
                  <MenuBar>
                    {["Datei", "Funktion", "Ansicht", "Vertrieb", "Einkauf", "Statistik", "Mawi", "Produktion", "Planung", "Stamm"].map((m) => <button key={m}>{m}</button>)}
                  </MenuBar>
                  <ToolBar $end>
                    <IconButton $color={SLATE} aria-label="Kalender"><CalIcon /></IconButton>
                    <IconButton $color={SLATE} aria-label="Favorit"><FaStar /></IconButton>
                    <IconButton $color={SLATE} aria-label="Drucken"><PrintIcon /></IconButton>
                    <IconButton $color={SLATE} aria-label="Ablage"><InboxIcon /></IconButton>
                  </ToolBar>
                  <FormFrame>
                    <Form>
                      <FormColumns>
                        <FormColumn>
                          <Field id="teil" label="Teil" value="6000120" />
                          <Field id="bezeichnung" label="Bezeichnung" value="PT-Schraube, KB 30 x 12" />
                          <Field id="bezeichnung2" label="" value="Kopf 5,5, DIN 7500" />
                        </FormColumn>
                        <FormColumn $far>
                          <FarRow>Suchbegriff</FarRow>
                          <FarRow>Selektion</FarRow>
                          <FarRow $before={54}>Teileart</FarRow>
                        </FormColumn>
                      </FormColumns>
                      <FormTabs>
                        {formTabs.map(([t, w], i) => <FormTab key={t} type="button" $w={w} $active={i === 0}>{t}</FormTab>)}
                      </FormTabs>
                      <FormColumns>
                        <FormColumn>
                          <Field id="verteilergruppe" label="Verteilergruppe" value="30" name="Normteile (Einkauf)" />
                          <Field id="werteflussgruppe" label="Werteflussgruppe" value="1014" name="Kaufteile" before={14} />
                          <Field id="teilegruppe" label="Teilegruppe" value="69" name="Diverse Teile" />
                          <Field id="sparte" label="Sparte" value="600" name="Sonstige Teile" />
                          <FormRow $before={13}>
                            <Label htmlFor="bild">Bild</Label>
                            <PictureButton id="bild" type="button" $color="#a9a9ab"><PictureFolder /></PictureButton>
                          </FormRow>
                          <FormRow $before={14}>
                            <Label htmlFor="abc">ABC-Klasse</Label>
                            <ClassBox><ClassSelect id="abc" disabled><option>C</option></ClassSelect></ClassBox>
                          </FormRow>
                          <Field id="din" label="DIN/ISO" />
                        </FormColumn>
                        <FormColumn $far>
                          <FarRow>LagerME</FarRow>
                          <FarRow $before={28}>Faktor LME-SME</FarRow>
                          <FarRow>Gew/LME</FarRow>
                          <FarRow $before={40}>Gewicht ME</FarRow>
                          <FarRow>Gew/GME</FarRow>
                          <FarRow $before={14}>StücklistenME</FarRow>
                          <FarRow>Stücklistenfaktor</FarRow>
                        </FormColumn>
                      </FormColumns>
                    </Form>
                  </FormFrame>
                </Win>
              </Windows>
            </Desk>
            <VTrack><DarkThumb><Ridges $down /></DarkThumb></VTrack>
          </Workspace>
          <HTrack><Nudge d="M5 1v6L1 4z" /><DarkHThumb><Ridges /></DarkHThumb><Nudge d="M1 1v6l4-3z" /></HTrack>
        </Main>
      </Body>
    </Page>
  );
}
